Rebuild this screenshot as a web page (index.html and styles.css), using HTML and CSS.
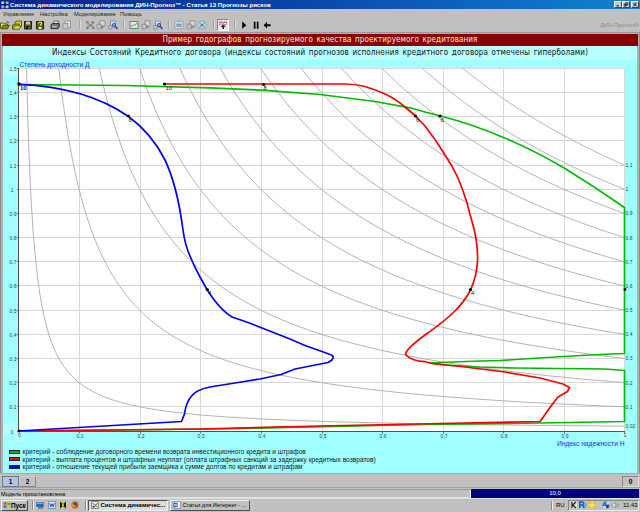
FILE: index.html
```html
<!DOCTYPE html>
<html lang="ru">
<head>
    <meta charset="UTF-8">
    <title>Система динамического моделирования ДИН-Прогноз</title>
    <link rel="stylesheet" href="styles.css">
</head>
<body>
    <svg class="defs" width="0" height="0">
        <symbol id="folder" viewBox="0 0 10 10">
            <path d="M0.5 8.5V3h3l1 1h3v1.5" fill="#e8e060" stroke="#3c3c00" stroke-width="0.8"/>
            <path d="M1 8.8L3 5.3h6.5L7.5 8.8z" fill="#8a8a10" stroke="#3c3c00" stroke-width="0.8"/>
            <path d="M6 2.4q1.5-1.5 2.8 0.4" fill="none" stroke="#222" stroke-width="0.8"/>
        </symbol>
        <symbol id="folders" viewBox="0 0 10 10">
            <path d="M3 6V2l2-1h4.5v5.5L7 9z" fill="#d8d020" stroke="#4a4a00" stroke-width="0.8"/>
            <path d="M0.5 9V4.8h2l0.8-0.8h4V9z" fill="#a8a010" stroke="#4a4a00" stroke-width="0.8"/>
            <path d="M1 9l2-3h6L7.2 9z" fill="#e8e050" stroke="#4a4a00" stroke-width="0.6"/>
        </symbol>
        <symbol id="disk" viewBox="0 0 10 10">
            <path d="M1.5 1.5h7v7.5h-7z" fill="#5c5c00" stroke="#1c1c00" stroke-width="1"/>
            <path d="M3 1.5h4v3H3z" fill="#c8c8c0"/>
            <path d="M3 6.3h4V9H3z" fill="#111"/>
            <path d="M5.6 7h1v1.6h-1z" fill="#ddd"/>
        </symbol>
        <symbol id="disk-as" viewBox="0 0 10 10">
            <path d="M1.5 1.5h7v7.5h-7z" fill="#5c5c00" stroke="#1c1c00" stroke-width="1"/>
            <path d="M3.4 3.4q0-1.4 1.6-1.4t1.6 1.3-1.6 2" fill="none" stroke="#f4f460" stroke-width="1.1"/>
            <path d="M3.5 6.8h3V9h-3z" fill="#ddd"/>
        </symbol>
        <symbol id="printer" viewBox="0 0 10 10">
            <path d="M3.5 4l0.8-3h4.2L7.5 4z" fill="#eee" stroke="#333" stroke-width="0.7"/>
            <path d="M1 4.5L2.5 3.6h6.8v3L8 8.6H1z" fill="#777" stroke="#222" stroke-width="0.9"/>
            <path d="M2 6.8h4.8" stroke="#ddd" stroke-width="0.9"/>
        </symbol>
        <symbol id="preview" viewBox="0 0 10 10">
            <path d="M3 1h5.5v6.5H3z" fill="#ddd" stroke="#888" stroke-width="0.7"/>
            <path d="M1 3.5h5V9H1z" fill="#c4c8cc" stroke="#888" stroke-width="0.7"/>
        </symbol>
        <symbol id="net" viewBox="0 0 10 10">
            <path d="M2.5 2.5l5.500 5.500M8 2.500L2.500 8M2 5.200h6" stroke="#5a9080" stroke-width="0.9"/>
            <path d="M1 1.200h2.600v2.400H1zM7 6.800h2.400v2.200H7z" fill="#b86868"/>
            <path d="M6.600 1.200h2.600v2.400H6.600zM1 6.800h2.600V9H1z" fill="#7c7ca0"/>
            <path d="M4 4h2.400v2.200H4z" fill="#709870"/>
        </symbol>
        <symbol id="copy" viewBox="0 0 10 10">
            <path d="M3.800 0.800H9v5.400H3.800z" fill="#d4d4d4" stroke="#888" stroke-width="0.8"/>
            <path d="M1 4.200h4.200v4.600H1z" fill="#c4c4c4" stroke="#888" stroke-width="0.8"/>
            <path d="M5 5.500l2 2M7 5.600v2H5" stroke="#666" stroke-width="0.6" fill="none"/>
        </symbol>
        <symbol id="find" viewBox="0 0 10 10">
            <path d="M2.500 1h5v6h-5z" fill="#d8dce4" stroke="#778" stroke-width="0.7"/>
            <path d="M0.800 5.500H4V9H0.800z" fill="#bcc" stroke="#777" stroke-width="0.6"/>
            <circle cx="6" cy="5" r="1.600" fill="#7ab4d8" stroke="#1c3c9c" stroke-width="0.8"/>
            <path d="M7.200 6.200L9.400 9" stroke="#2040a0" stroke-width="1.4"/>
        </symbol>
        <symbol id="plot" viewBox="0 0 10 10">
            <path d="M1 1.500h8v7H1z" fill="#dcecdc" stroke="#4a8a5a" stroke-width="0.9"/>
            <path d="M2 7l2-2.300 1.200 0.900L8.300 3" fill="none" stroke="#c04040" stroke-width="0.8"/>
        </symbol>
        <symbol id="table" viewBox="0 0 10 10">
            <rect x="0.800" y="1.400" width="8.400" height="7.400" rx="2" fill="#d4dce4" stroke="#8a94a0" stroke-width="0.7"/>
            <path d="M2.400 3.600h5.200v3.200H2.400z" fill="#6c98c4"/>
            <path d="M2.400 5.200h5.200" stroke="#bcd" stroke-width="0.5"/>
        </symbol>
        <symbol id="links" viewBox="0 0 10 10">
            <rect x="0.800" y="1.400" width="8.400" height="7.400" rx="2" fill="#b8d4dc" stroke="#94a4ac" stroke-width="0.7"/>
            <path d="M2.200 2.600L8 7.600M8 2.600L2.200 7.600" stroke="#5aa0b4" stroke-width="1"/>
            <path d="M3.800 4h2.400v2.200H3.800z" fill="#5884b0"/>
        </symbol>
        <symbol id="model" viewBox="0 0 10 10">
            <path d="M0.5 0.8h9v8.4h-9z" fill="#f0e8f0"/>
            <path d="M1 3l2-1.4 2 1.6 2-1.4 2 1" fill="none" stroke="#d03030" stroke-width="1"/>
            <path d="M1 5l2-1.4 2 1.6L9 4" fill="none" stroke="#6060c0" stroke-width="0.8"/>
            <path d="M5.2 4.4L8 7H6v2H4.4V7H2.6z" fill="#222"/>
        </symbol>
        <symbol id="play" viewBox="0 0 10 10"><path d="M3.2 1.6L7.4 5.2 3.2 8.8z"/></symbol>
        <symbol id="pause" viewBox="0 0 10 10"><path d="M2.8 1.8h1.7v7H2.8zM5.8 1.8h1.7v7H5.8z"/></symbol>
        <symbol id="back" viewBox="0 0 10 10"><path d="M1.6 5.2L5 1.8v2.4h3.6v2H5v2.4z"/></symbol>
    </svg>

    <div class="titlebar">
        <svg class="app-icon" viewBox="0 0 8 8">
            <path d="M0.3 0.5h3v2.6h-3zM4.6 4.4h3v2.8h-3z" fill="#d8c8b0"/>
            <path d="M4.6 0.5h3v2.6h-3zM0.3 4.4h3v2.8h-3z" fill="#8cb4d8"/>
            <path d="M3 2.6h2v2H3z" fill="#111"/>
        </svg>
        <span class="title">Система динамического моделирования ДИН-Прогноз™ - Статья 13 Прогнозы рисков</span>
        <span class="win-btn"><svg viewBox="0 0 7 6"><path d="M1.5 4.6h3" stroke="#000"/></svg></span>
        <span class="win-btn"><svg viewBox="0 0 7 6"><path d="M2.8 1h2.8v2.5H2.8zM1.3 2.7h2.6V5H1.3z" fill="#c0c0c0" stroke="#000" stroke-width="0.8"/></svg></span>
        <span class="win-btn close"><svg viewBox="0 0 7 6"><path d="M1.7 1l3.6 4M5.3 1L1.7 5" stroke="#000" stroke-width="1.1"/></svg></span>
    </div>

    <div class="menu">
        <span class="m1">Управление</span>
        <span class="m2">Настройка</span>
        <span class="m3">Моделирование</span>
        <span class="m4">Помощь</span>
    </div>

    <div class="toolbar">
        <svg><use href="#folder"/></svg>
        <svg><use href="#folders"/></svg>
        <svg><use href="#disk"/></svg>
        <svg><use href="#disk-as"/></svg>
        <i class="gap"></i>
        <svg><use href="#printer"/></svg>
        <svg><use href="#preview"/></svg>
        <i class="sep first"></i>
        <svg><use href="#net"/></svg>
        <svg><use href="#copy"/></svg>
        <svg><use href="#find"/></svg>
        <i class="sep"></i>
        <svg><use href="#plot"/></svg>
        <svg><use href="#copy"/></svg>
        <svg><use href="#find"/></svg>
        <i class="sep"></i>
        <svg><use href="#table"/></svg>
        <svg><use href="#copy"/></svg>
        <svg><use href="#links"/></svg>
        <i class="sep last"></i>
        <span class="pressed"><svg><use href="#model"/></svg></span>
        <i class="sep wide"></i>
        <svg><use href="#play"/></svg>
        <svg><use href="#pause"/></svg>
        <svg><use href="#back"/></svg>
        <span class="brand">ДИН-Прогноз®</span>
    </div>

    <div class="work">
        <div class="banner"><span>Пример годографов прогнозируемого качества проектируемого кредитования</span></div>
        <div class="panel">
            <div class="subtitle"><span>Индексы Состояний Кредитного договора (индексы состояний прогнозов исполнения кредитного договора отмечены гиперболами)</span></div>
            <svg class="chart" viewBox="3 60 634 388" width="634" height="388">
                <path class="corner" d="M4 66h14.5v9.5H4zM4 424h14.5v9.5H4zM15 432h9.5v9H15zM620 432h10v9h-10z"/>
                <rect x="18.5" y="68.5" width="606" height="362.5" fill="#fff"/>
                <g id="grid"></g>
                <g id="hyperbolas"></g>
                <path class="axis" d="M18.5 68V431.5H625"/>
                <path class="curve green" d="M18.5 84.5L125 85.5 210 87.8 265 90.3 320 94.5 375 101.5 410 107.8 425 112 440.5 116Q472 124 504 137.7T565 168.5Q595 187 624.5 207.5V353.500L600 354.500 555 357 500 360.500 465 361.500 430 363 445 365 480 367 515 368 605 369 624.500 370.500V421.500L540 423 425 424.500 210 429 18.500 431"/>
                <path class="curve red" d="M164.500 84H345Q355 84 365 86.500 375 89.500 385 94T405 107L415.500 116 425 126Q436 140 445 155 453 167 458 178 463 190 466.700 202L474.300 230C476.500 240 478 250 477.500 261 477 273 474 282 470.700 289.500 466 299 461 305 455 311 445 321 435 328 425 335Q406 349 405.500 354.500 411 361 425 361.700L432 363.500 465 367 505 372 540 378 563 384 569.500 387.500 567.500 391.500 558 397 551 406 544 416 540 421.500 440 423.500 320 426 200 429 18.500 431"/>
                <path class="curve blue" d="M18.500 84.300C60 86 98 95 128.500 116.500 147 130 158 146 165 160 175 181 180 207 183 230Q185 245 190 256 194 266 200 277L207 289.500 212 297Q222 311 232 317L248 322.500 262 328 290 339 305 345.500 322 351.500 330 354.500Q335 356 332 360L328 362.500 295 369 281 374.500 260 379 235 383 210 387Q196 390 192 395.500 186 402 184.500 414L181.500 421.500 130 424.500 18.500 431"/>
                <g class="dots">
                    <circle cx="19" cy="84" r="1.700"/><circle cx="128.500" cy="116" r="1.600"/><circle cx="207.300" cy="289.500" r="1.600"/>
                    <circle cx="164.500" cy="84" r="1.600"/><circle cx="263.800" cy="84.500" r="1.600"/><circle cx="415.500" cy="116" r="1.600"/>
                    <circle cx="440" cy="116" r="1.600"/><circle cx="470.500" cy="289.500" r="1.600"/><circle cx="625" cy="289.500" r="1.400"/><circle cx="19" cy="431" r="1.400"/>
                </g>
                <g class="marks">
                    <text class="thick" x="20" y="90">10</text>
                    <text x="128.500" y="122">6</text><text x="208" y="295">4</text>
                    <text x="165.500" y="90">10</text><text x="263.500" y="90">8</text>
                    <text x="416" y="122">6</text><text x="440.500" y="122">6</text><text x="471" y="295">4</text>
                </g>
                <g id="ticks"></g>
                <text class="caption" x="19.500" y="67.300" textLength="70" lengthAdjust="spacingAndGlyphs">Степень доходности Д</text>
                <text class="caption" x="557" y="446" textLength="67.500" lengthAdjust="spacingAndGlyphs">Индекс надежности Н</text>
            </svg>
            <div class="legend">
                <div class="row"><i class="swatch green"></i><span>критерий - соблюдение договорного времени возврата инвестиционного кредита и штрафов</span></div>
                <div class="row"><i class="swatch red"></i><span>критерий - выплата процентов и штрафных неуплат (оплата штрафных санкций за задержку кредитных возвратов)</span></div>
                <div class="row"><i class="swatch blue"></i><span>критерий - отношение текущей прибыли заемщика к сумме долгов по кредитам и штрафам</span></div>
            </div>
        </div>
    </div>

    <div class="tabs">
        <span class="tab active">1</span>
        <span class="tab">2</span>
        <span class="counter">0</span>
    </div>

    <div class="status">
        <span class="message">Модель приостановлена</span>
        <span class="progress">10,0</span>
    </div>

    <div class="taskbar">
        <span class="start">
            <svg viewBox="0 0 8 8"><path d="M0.500 1.500Q2 0.500 3.600 1.300V3.700Q2 3 0.500 3.800z" fill="#e85020"/><path d="M4.200 1.500Q6 2.300 7.600 1.300V3.800Q6 4.600 4.200 3.900z" fill="#60b030"/><path d="M0.500 4.400Q2 3.600 3.600 4.400V6.900Q2 6 0.500 6.900z" fill="#3080d0"/><path d="M4.200 4.600Q6 5.300 7.600 4.400V6.900Q6 7.700 4.200 7z" fill="#f0c020"/></svg>
            <b>Пуск</b>
        </span>
        <i class="bar"></i>
        <div class="quick">
            <svg viewBox="0 0 8 8"><path d="M0.300 1h7.400v5H0.300z" fill="#2868b8"/><path d="M0.800 1.500h6v1.500h-6z" fill="#78b0e0"/><path d="M2 7h5" stroke="#204880"/></svg>
            <svg viewBox="0 0 8 8"><path d="M0.500 0.500h7v7h-7z" fill="#e0ecfc" stroke="#4878c0" stroke-width="0.700"/><path d="M1.800 2.200l1 3.600 1.200-3 1.200 3 1-3.600" fill="none" stroke="#2050a8" stroke-width="1"/></svg>
            <svg viewBox="0 0 8 8"><path d="M0.500 1h7v6h-7z" fill="#d8d850"/><path d="M1 0.500L4 3 7 0.500V7.500L4 5 1 7.500z" fill="#181808"/><circle cx="4" cy="4" r="1" fill="#f0f060"/></svg>
            <svg viewBox="0 0 8 8"><circle cx="4" cy="4" r="3.700" fill="#e06818"/><circle cx="4.200" cy="3.400" r="2.200" fill="#2858a8"/><path d="M0.600 2Q2 4 4.600 4.200 4 6 2 6z" fill="#f8a020"/></svg>
        </div>
        <i class="bar b2"></i>
        <span class="task on">
            <svg viewBox="0 0 8 8"><path d="M0.500 0.500h7v7h-7z" fill="#e8e8e8" stroke="#555" stroke-width="0.600"/><path d="M1.500 2l5 4M6.500 2l-4 5" stroke="#444" stroke-width="0.800"/><circle cx="2.300" cy="5.500" r="1" fill="#a04040"/></svg>
            <b>Система динамичес...</b>
        </span>
        <span class="task">
            <svg viewBox="0 0 8 8"><path d="M1.500 0.500h6v7h-6z" fill="#f0f4ff" stroke="#5070b0" stroke-width="0.600"/><path d="M0.300 1.800h4.400v4.400H0.300z" fill="#3060b8"/><path d="M1 2.800l0.700 2.300 0.800-1.800 0.800 1.800 0.700-2.300" fill="none" stroke="#fff" stroke-width="0.600"/></svg>
            <span class="label">Статьи для Интернет - ...</span>
        </span>
        <i class="bar b3"></i>
        <span class="lang">RU</span>
        <span class="tray">
            <svg viewBox="0 0 8 8"><path d="M0.500 0.500h6.500v7H0.500z" fill="#ddd"/><path d="M2 1v6M6 1L2.600 4 6 7" fill="none" stroke="#222" stroke-width="1.200"/></svg>
            <svg viewBox="0 0 8 8"><path d="M0.800 7V1h3q2 1.500 0 3h-3M3.500 4L5.500 7" fill="none" stroke="#1858b0" stroke-width="1.500"/><path d="M5 3.500l2.600-2v4L5.500 7.500z" fill="#60b0d0"/></svg>
            <svg viewBox="0 0 8 8"><circle cx="4" cy="4" r="3.600" fill="#f0c010"/><path d="M0.600 4h6.800M4 0.500v7" stroke="#fff8b0" stroke-width="0.900"/></svg>
            <svg class="spaced" viewBox="0 0 8 8"><circle cx="4" cy="4" r="3.500" fill="#3878b8"/><path d="M1 5h3v2.500H1zM4.500 1h3v2.600h-3z" fill="#b8e0f0"/><circle cx="5.500" cy="5.500" r="1.400" fill="#104080"/></svg>
            <svg viewBox="0 0 8 8"><path d="M1 3h1.500L4.500 1v6L2.500 5H1z" fill="#eee" stroke="#777" stroke-width="0.600"/><path d="M5.600 2.500q1.200 1.500 0 3M6.600 1.500q2 2.500 0 5" fill="none" stroke="#60a060" stroke-width="0.600"/></svg>
            <span class="clock">11:43</span>
        </span>
    </div>

    <script>
        // plot area: reliability index along x (0..1), profitability along y (0..1.5)
        const px = h => 18.5 + h * 606;
        const py = d => 431 - d * 241.7;
        const fmt = v => String(Math.round(v * 100) / 100).replace('.', ',');

        let grid = '';
        let ticks = '';
        for (let i = 1; i <= 10; i++) {
            const x = Math.round(px(i / 10)) + 0.5 - (i === 10 ? 1 : 0);
            grid += `<path d="M${x} 68.5V431"/>`;
            ticks += `<path d="M${x} 431v2.5"/>`;
            ticks += `<text x="${x + 0.5}" y="${i === 10 ? 437 : 438}" text-anchor="middle">${fmt(i / 10)}</text>`;
        }
        ticks += '<text x="19.5" y="437" text-anchor="middle">0</text>';
        for (let i = 0; i <= 15; i++) {
            const y = Math.round(py(i / 10) - 0.5) + 0.5;
            if (i > 0) grid += `<path d="M18.5 ${y}H624.5"/>`;
            ticks += `<path d="M17 ${y}h1.5"/>`;
            ticks += `<text x="${i % 10 ? 16.5 : 13.5}" y="${y + 2}" text-anchor="end">${fmt(i / 10)}</text>`;
        }

        // constant-index hyperbolas, H * D = c
        let curves = '';
        [0.02, 0.1, 0.2, 0.3, 0.4, 0.5, 0.6, 0.7, 0.8, 0.9, 1, 1.1].forEach(c => {
            let d = '';
            for (let k = 0; k <= 80; k++) {
                const h = (c / 1.5) * Math.pow(1.5 / c, k / 80);
                d += (k ? 'L' : 'M') + px(h).toFixed(1) + ' ' + py(c / h).toFixed(1);
            }
            curves += `<path d="${d}"/>`;
            ticks += `<text x="625.5" y="${(py(c) + 1.9 - (c < 0.1 ? 0.5 : 0)).toFixed(1)}">${fmt(c)}</text>`;
        });

        document.getElementById('grid').innerHTML = grid;
        document.getElementById('ticks').innerHTML = ticks;
        document.getElementById('hyperbolas').innerHTML = curves;
    </script>
</body>
</html>
```
FILE: styles.css
```css
* {
    box-sizing: border-box;
}
body {
    margin: 0;
    width: 640px;
    height: 512px;
    overflow: hidden;
    background: #c0c0c0;
    font-family: "Liberation Sans", Arial, sans-serif;
    font-size: 6px;
    color: #000;
    display: flex;
    flex-direction: column;
    white-space: nowrap;
}
svg {
    display: block;
    flex: none;
}
.defs {
    position: absolute;
}

/* window chrome */
.titlebar {
    height: 9px;
    flex: none;
    display: flex;
    align-items: center;
    padding: 0 1px;
    background: linear-gradient(90deg, #08248c, #0a44a8 45%, #1084d0);
}
.app-icon {
    width: 8px;
    height: 8px;
}
.title {
    flex: 1;
    margin-left: 1px;
    color: #fff;
    font-size: 6.1px;
    font-weight: bold;
    line-height: 9px;
}
.win-btn {
    width: 8px;
    height: 7px;
    background: #c8c8c8;
    border: 1px solid;
    border-color: #fff #444 #444 #fff;
}
.win-btn svg {
    width: 6px;
    height: 5px;
}
.win-btn.close {
    margin-left: 1px;
}
.menu {
    height: 10px;
    flex: none;
    display: flex;
    padding: 1px 0 0 3px;
    font-size: 5.6px;
    line-height: 9px;
    color: #222;
}
.menu span {
    flex: none;
}
.m1 { width: 37px; }
.m2 { width: 34px; }
.m3 { width: 46px; }
.toolbar {
    height: 13px;
    flex: none;
    display: flex;
    align-items: center;
    padding: 0 1px 2px 0;
}
.toolbar svg {
    width: 10px;
    height: 10px;
    margin-right: 1.6px;
}
.gap {
    width: 4px;
}
.sep {
    width: 1px;
    height: 9px;
    margin: 0 5px 0 4px;
    background: #a4a4a4;
    box-shadow: 1px 0 #d8d8d8;
}
.sep.first {
    margin-left: 5px;
}
.sep.last {
    margin-right: 3px;
}
.sep.wide {
    margin: 0 4px 0 5px;
}
.pressed {
    width: 12px;
    height: 12px;
    background: #e0e0e0;
    border: 1px solid;
    border-color: #888 #fff #fff #888;
}
.brand {
    margin-left: auto;
    font-size: 5.6px;
    color: #8c8c8c;
}

/* document area */
.work {
    height: 441px;
    flex: none;
    padding: 1px 1px 0;
    border-top: 1px solid #989898;
    border-left: 1px solid #909090;
    border-right: 1px solid #909090;
    background: #b0b0b0;
}
.banner {
    height: 12px;
    background: #880000;
    color: #fff0d0;
    text-align: center;
    font-family: "DejaVu Sans Condensed", "DejaVu Sans", sans-serif;
    font-size: 8px;
    line-height: 12px;
    letter-spacing: 0.09px;
    word-spacing: 1.2px;
}
.panel {
    height: 427px;
    margin: 0 1px;
    background: #a0ffff;
    color: #111;
}
.subtitle {
    height: 14px;
    text-align: center;
    background: #b8ffff;
    font-family: "DejaVu Sans Condensed", "DejaVu Sans", sans-serif;
    font-size: 8px;
    line-height: 14px;
    letter-spacing: 0.12px;
    word-spacing: 1.2px;
}
.corner {
    fill: #b8ffff;
}
.chart text {
    font-family: "Liberation Sans", Arial, sans-serif;
    font-size: 5px;
}
#grid path {
    stroke: #d8d8d8;
    stroke-width: 1;
}
#hyperbolas path {
    fill: none;
    stroke: #aaa;
    stroke-width: 0.9;
}
#ticks path {
    stroke: #406060;
    stroke-width: 0.8;
}
#ticks text {
    fill: #184848;
}
.axis {
    fill: none;
    stroke: #505050;
    stroke-width: 1;
}
.curve {
    fill: none;
    stroke-width: 1.7;
    stroke-linejoin: round;
}
.curve.green { stroke: #00bc00; }
.curve.red { stroke: #fa0000; }
.curve.blue { stroke: #0000f0; }
.chart .marks text {
    font-size: 6px;
    fill: #222;
}
.chart .marks .thick {
    font-weight: bold;
}
.chart .caption {
    font-size: 6.5px;
    fill: #2030f0;
}
.legend {
    padding-left: 6px;
    font-size: 6.5px;
    letter-spacing: 0.04px;
}
.row {
    height: 7.5px;
    display: flex;
    align-items: center;
    line-height: 7px;
}
.swatch {
    width: 11px;
    height: 4px;
    margin-right: 2.5px;
    border: 0.5px solid #224;
}
.swatch.green { background: #00bc00; }
.swatch.red { background: #fa0000; }
.swatch.blue { background: #0000f0; }

/* sheets and status */
.tabs {
    height: 14px;
    flex: none;
    display: flex;
    align-items: center;
    padding: 1px 1px 0 2px;
    border-top: 1px solid #a8a8a8;
    font-size: 6.5px;
    font-weight: bold;
}
.tab,
.counter {
    width: 17px;
    height: 11px;
    line-height: 10px;
    text-align: center;
    border: 1px solid;
    border-color: #d0d0d0 #888 #888 #d0d0d0;
}
.tab.active {
    background: #b0c4e4;
    border-color: #707880;
}
.counter {
    margin-left: auto;
    border-color: #888 #e0e0e0 #e0e0e0 #888;
}
.status {
    height: 11px;
    flex: none;
    display: flex;
    padding: 1px 1px 0 0;
    border-top: 1px solid #a0a0a0;
    line-height: 8px;
}
.message {
    width: 471px;
    height: 9px;
    padding-left: 1px;
    font-size: 5.6px;
    border-right: 1px solid #eee;
    border-bottom: 1px solid #e0e0e0;
    border-top: 1px solid #999;
}
.progress {
    flex: 1;
    height: 9px;
    background: #000080;
    color: #fff;
    text-align: center;
    line-height: 9px;
}

/* taskbar */
.taskbar {
    height: 13px;
    flex: none;
    display: flex;
    align-items: center;
    padding: 0 1px;
    border-top: 1px solid #e0e0e0;
}
.taskbar svg {
    width: 8px;
    height: 8px;
}
.start,
.task {
    height: 11px;
    display: flex;
    align-items: center;
    border: 1px solid;
    border-color: #f0f0f0 #505050 #505050 #f0f0f0;
}
.start {
    width: 27px;
    padding-left: 1px;
    font-size: 6.4px;
}
.bar {
    width: 1px;
    height: 9px;
    margin: 0 3px 0 4px;
    background: #888;
    box-shadow: 1px 0 #eee;
}
.quick {
    display: flex;
    gap: 3.5px;
}
.bar.b2 {
    margin: 0 2px 0 6px;
}
.task {
    width: 80px;
    padding-left: 2px;
    margin-right: 2px;
}
.task svg {
    margin-right: 2px;
}
.task .label {
    font-size: 5.5px;
}
.task.on {
    background: #dcdcdc;
    border-color: #505050 #f0f0f0 #f0f0f0 #505050;
}
.bar.b3 {
    margin: 0 4px 0 auto;
}
.lang {
    width: 12px;
}
.tray {
    width: 71px;
    height: 11px;
    display: flex;
    align-items: center;
    gap: 1px;
    padding-left: 1px;
    border: 1px solid;
    border-color: #888 #eee #eee #888;
}
.spaced {
    margin-left: 5px;
}
.clock {
    margin-left: 3px;
}
```
